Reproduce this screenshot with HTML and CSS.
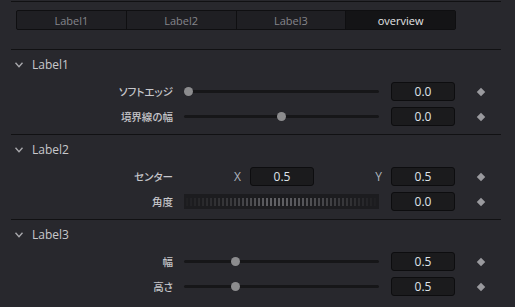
FILE: index.html
```html
<!DOCTYPE html>
<html lang="ja">
<head>
    <meta charset="UTF-8">
    <meta name="viewport" content="width=device-width, initial-scale=1.0">
    <title>Inspector</title>
    <link rel="stylesheet" href="styles.css">
</head>
<body>
    <div class="panel">
        <div class="rule"></div>
        <div class="tabs">
            <div class="tab">Label1</div>
            <div class="tab">Label2</div>
            <div class="tab">Label3</div>
            <div class="tab active">overview</div>
        </div>

        <section class="group">
            <div class="group-head">
                <svg class="chevron" width="8" height="6" viewBox="0 0 8 6"><polyline points="0.5,0.8 4,4.6 7.5,0.8" /></svg>
                <span>Label1</span>
            </div>
            <div class="row">
                <div class="row-label">ソフトエッジ</div>
                <div class="slider"><div class="thumb" style="--v: 0"></div></div>
                <div class="value">0.0</div>
                <div class="key"></div>
            </div>
            <div class="row">
                <div class="row-label">境界線の幅</div>
                <div class="slider"><div class="thumb" style="--v: 0.5"></div></div>
                <div class="value">0.0</div>
                <div class="key"></div>
            </div>
        </section>

        <section class="group">
            <div class="group-head">
                <svg class="chevron" width="8" height="6" viewBox="0 0 8 6"><polyline points="0.5,0.8 4,4.6 7.5,0.8" /></svg>
                <span>Label2</span>
            </div>
            <div class="row">
                <div class="row-label">センター</div>
                <div class="axis axis-x">X</div>
                <div class="value value-x">0.5</div>
                <div class="axis axis-y">Y</div>
                <div class="value value-y">0.5</div>
                <div class="key"></div>
            </div>
            <div class="row">
                <div class="row-label">角度</div>
                <div class="dial"></div>
                <div class="value">0.0</div>
                <div class="key"></div>
            </div>
        </section>

        <section class="group">
            <div class="group-head">
                <svg class="chevron" width="8" height="6" viewBox="0 0 8 6"><polyline points="0.5,0.8 4,4.6 7.5,0.8" /></svg>
                <span>Label3</span>
            </div>
            <div class="row">
                <div class="row-label">幅</div>
                <div class="slider"><div class="thumb" style="--v: 0.255"></div></div>
                <div class="value">0.5</div>
                <div class="key"></div>
            </div>
            <div class="row">
                <div class="row-label">高さ</div>
                <div class="slider"><div class="thumb" style="--v: 0.255"></div></div>
                <div class="value">0.5</div>
                <div class="key"></div>
            </div>
        </section>
    </div>
</body>
</html>
```

FILE: styles.css
```css
body {
    margin: 0;
    background-color: #28282d;
    color: #c4c4c8;
    font-family: "Open Sans", "Noto Sans CJK JP", sans-serif;
    font-size: 11px;
}
.panel {
    width: 490px;
    margin-left: 11px;
    padding-top: 1px;
}
.rule {
    border-top: 1px solid #111113;
}
.tabs {
    display: flex;
    width: 440px;
    height: 20px;
    margin: 8px 0 19px 5px;
    box-sizing: border-box;
    border: 1px solid #0f0f11;
    border-radius: 2px;
    background-color: #1f1f23;
}
.tab {
    flex: 1;
    display: flex;
    align-items: center;
    justify-content: center;
    color: #85858b;
    font-size: 11px;
    border-left: 1px solid #0f0f11;
}
.tab:first-child {
    border-left: none;
}
.tab.active {
    background-color: #141416;
    color: #e6e6e8;
}
.group {
    border-top: 1px solid #111113;
    padding-bottom: 5px;
}
.group-head {
    display: flex;
    align-items: center;
    height: 29px;
    padding-left: 4px;
    font-size: 12px;
    color: #c8c8cc;
}
.chevron {
    margin-right: 9px;
    fill: none;
    stroke: #a8a8ac;
    stroke-width: 1.4;
}
.row {
    display: flex;
    align-items: center;
    height: 25px;
}
.row-label {
    width: 162px;
    text-align: right;
    font-size: 10.5px;
    font-weight: 500;
    font-feature-settings: "palt";
    color: #c6c6ca;
}
.slider {
    position: relative;
    width: 195px;
    height: 9px;
    margin-left: 11px;
}
.slider::before {
    content: "";
    position: absolute;
    left: 0;
    right: 0;
    top: 3px;
    height: 3px;
    border-radius: 2px;
    background-color: #161618;
}
.thumb {
    position: absolute;
    top: 0;
    left: calc((100% - 9px) * var(--v));
    width: 9px;
    height: 9px;
    border-radius: 50%;
    background-color: #8c8c8e;
}
.dial {
    position: relative;
    width: 195px;
    height: 15px;
    margin-left: 11px;
    background-color: #1c1c1f;
}
.dial::before {
    content: "";
    position: absolute;
    left: 2px;
    right: 2px;
    top: 4px;
    bottom: 3px;
    background: repeating-linear-gradient(90deg, #626266 0 2px, transparent 2px 4px);
    -webkit-mask-image: linear-gradient(90deg, rgba(0,0,0,0.06), rgba(0,0,0,0.45) 25%, rgba(0,0,0,1) 45%, rgba(0,0,0,0.85) 60%, rgba(0,0,0,0.03));
    mask-image: linear-gradient(90deg, rgba(0,0,0,0.06), rgba(0,0,0,0.45) 25%, rgba(0,0,0,1) 45%, rgba(0,0,0,0.85) 60%, rgba(0,0,0,0.03));
}
.value {
    width: 64px;
    height: 19px;
    margin-left: 12px;
    box-sizing: border-box;
    display: flex;
    align-items: center;
    justify-content: center;
    border: 1px solid #0d0d0f;
    border-radius: 3px;
    background-color: #1b1b1d;
    color: #dfe3ea;
    font-size: 12px;
}
.axis {
    box-sizing: border-box;
    text-align: right;
    padding-right: 9px;
    font-size: 12px;
    color: #aeb4be;
}
.axis-x {
    width: 66px;
    margin-left: 11px;
}
.axis-y {
    width: 77px;
}
.value-x, .value-y {
    margin-left: 0;
}
.key {
    width: 6px;
    height: 6px;
    margin-left: 23px;
    transform: rotate(45deg);
    background-color: #9a9a9e;
}
```
